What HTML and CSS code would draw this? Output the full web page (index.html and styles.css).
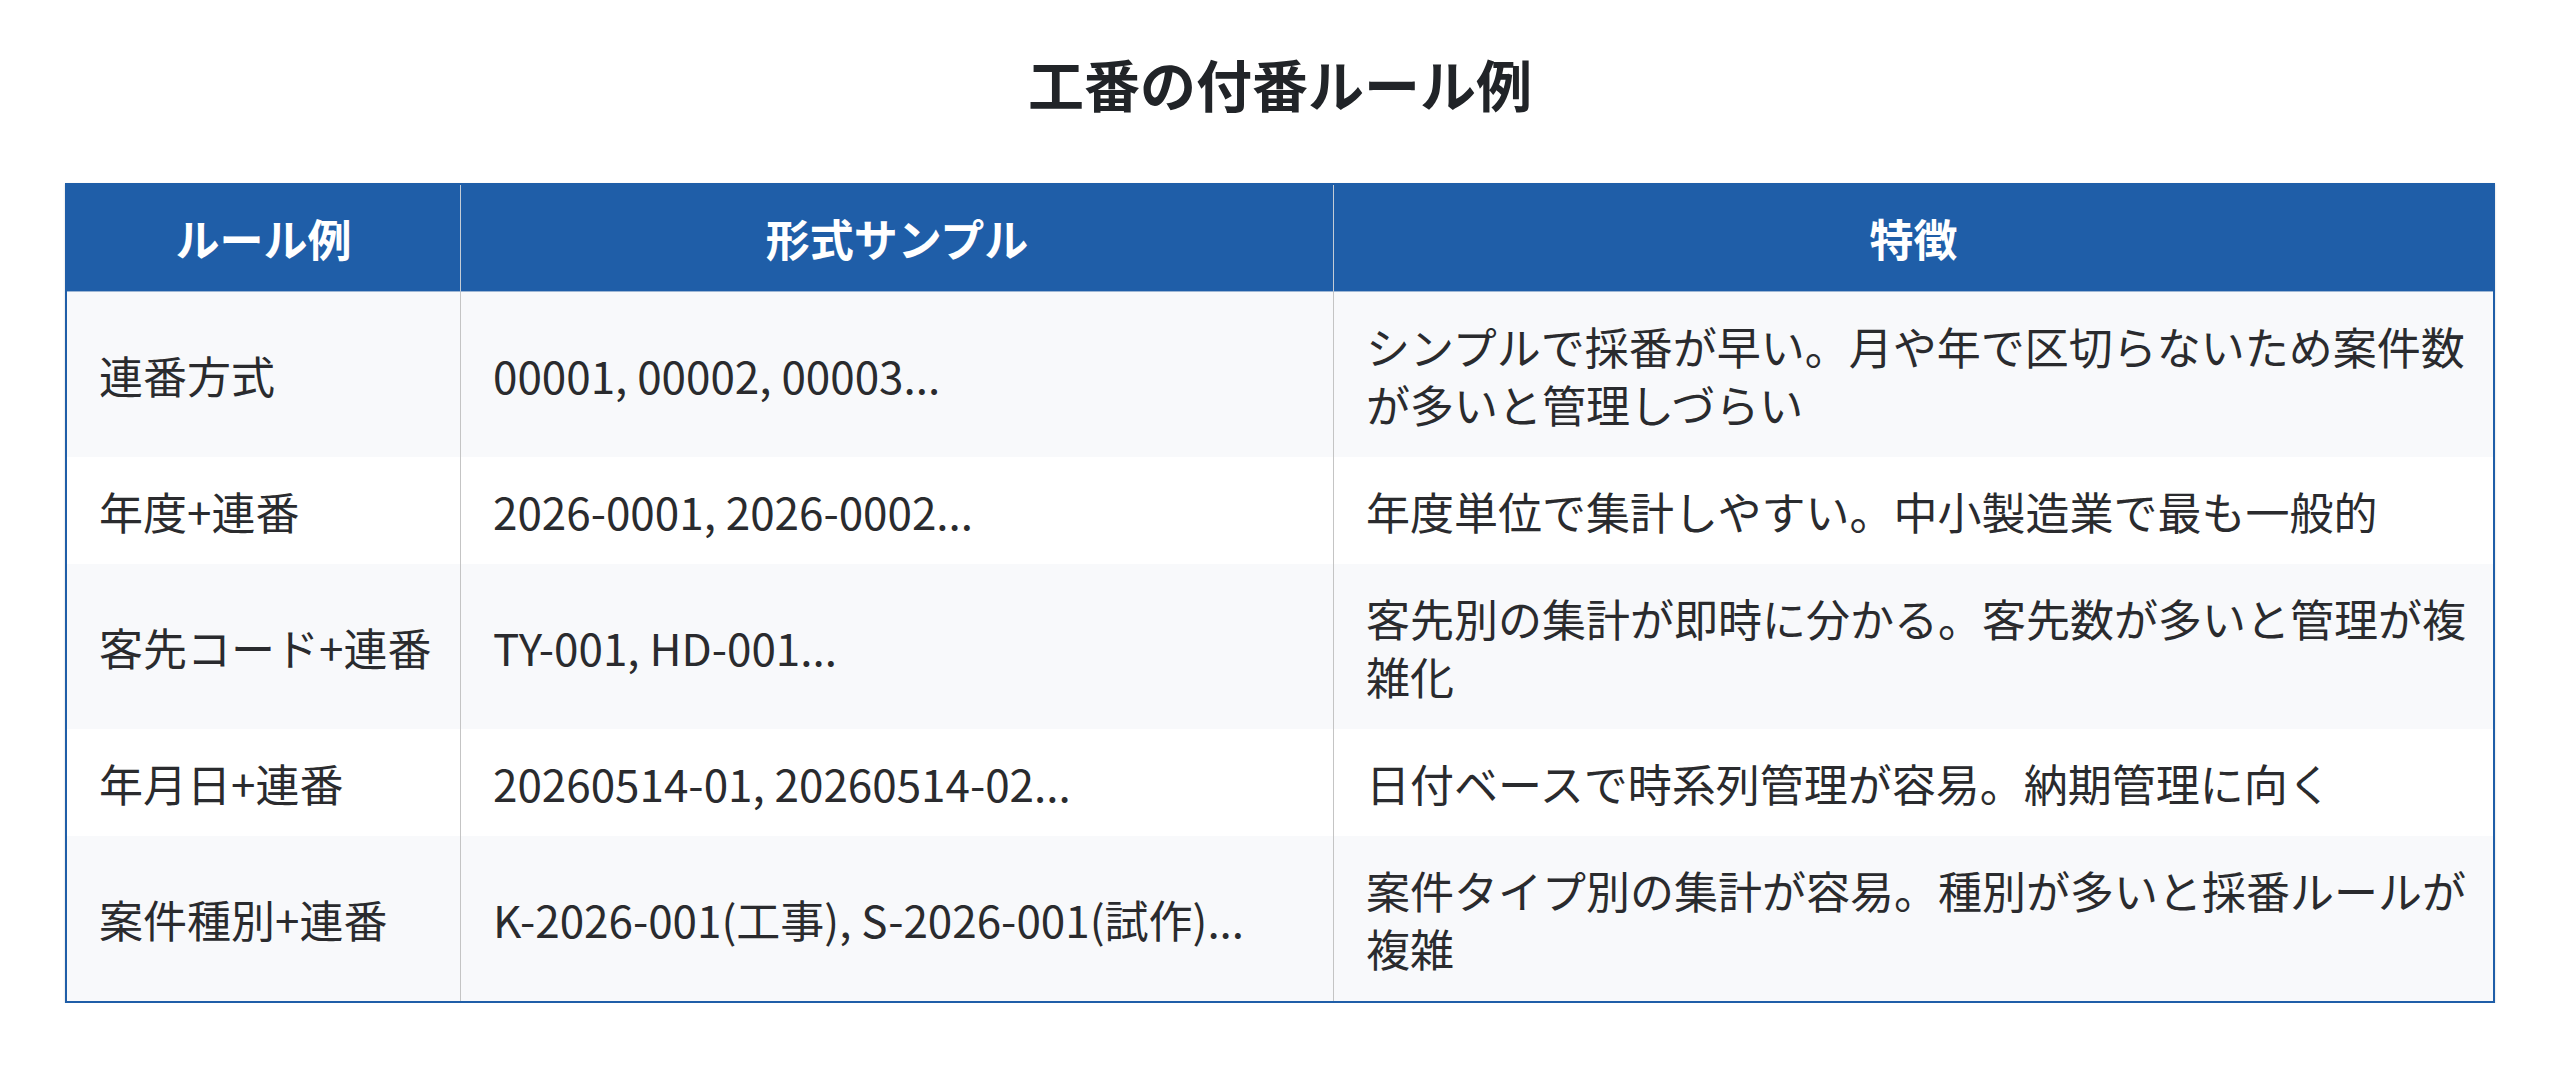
FILE: index.html
```html
<!DOCTYPE html>
<html lang="ja">
<head>
<meta charset="utf-8">
<title>工番の付番ルール例</title>
<link rel="stylesheet" href="styles.css">
</head>
<body>
<main class="page">
  <h1 class="title">工番の付番ルール例</h1>
  <table class="rules">
    <colgroup>
      <col class="col-rule">
      <col class="col-sample">
      <col class="col-feature">
    </colgroup>
    <thead>
      <tr>
        <th>ルール例</th>
        <th>形式サンプル</th>
        <th>特徴</th>
      </tr>
    </thead>
    <tbody>
      <tr>
        <td>連番方式</td>
        <td>00001, 00002, 00003...</td>
        <td>シンプルで採番が早い。月や年で区切らないため案件数が多いと管理しづらい</td>
      </tr>
      <tr>
        <td>年度+連番</td>
        <td>2026-0001, 2026-0002...</td>
        <td>年度単位で集計しやすい。中小製造業で最も一般的</td>
      </tr>
      <tr>
        <td>客先コード+連番</td>
        <td>TY-001, HD-001...</td>
        <td>客先別の集計が即時に分かる。客先数が多いと管理が複雑化</td>
      </tr>
      <tr>
        <td>年月日+連番</td>
        <td>20260514-01, 20260514-02...</td>
        <td>日付ベースで時系列管理が容易。納期管理に向く</td>
      </tr>
      <tr>
        <td>案件種別+連番</td>
        <td>K-2026-001(工事), S-2026-001(試作)...</td>
        <td>案件タイプ別の集計が容易。種別が多いと採番ルールが複雑</td>
      </tr>
    </tbody>
  </table>
</main>
</body>
</html>
```

FILE: styles.css
```css
html, body {
  margin: 0;
  padding: 0;
  background: #ffffff;
}

body {
  font-family: "Noto Sans CJK JP", "Noto Sans", sans-serif;
  color: #2a2b2e;
}

.page {
  padding: 0 65px;
}

.title {
  margin: 47px 0 64px;
  font-size: 56px;
  line-height: 72px;
  font-weight: 700;
  text-align: center;
  color: #212428;
}

.rules {
  width: 2430px;
  border-collapse: separate;
  border-spacing: 0;
  table-layout: fixed;
  border: 2px solid #1f5ea8;
  box-shadow: 0 1px 2px rgba(0, 0, 0, 0.18);
  font-size: 44px;
  line-height: 58px;
}

.col-rule { width: 394px; }
.col-sample { width: 873px; }
.col-feature { width: auto; }

.rules th {
  background: #1f5ea8;
  color: #ffffff;
  font-weight: 700;
  text-align: center;
  padding: 24px 32px;
  border-right: 1px solid #c4ccd6;
  border-bottom: 1px solid #9db6d4;
}

.rules td {
  padding: 25px 32px 24px;
  text-align: left;
  vertical-align: middle;
  border-right: 1px solid #c4c4c4;
}

.rules td:nth-child(1),
.rules td:nth-child(2) {
  white-space: nowrap;
  padding-right: 16px;
}

.rules td:nth-child(3) {
  padding-right: 20px;
}

.rules th:last-child,
.rules td:last-child {
  border-right: none;
}

.rules tbody tr:nth-child(odd) td {
  background: #f8f9fb;
}

.rules tbody tr:nth-child(even) td {
  background: #ffffff;
}
```
